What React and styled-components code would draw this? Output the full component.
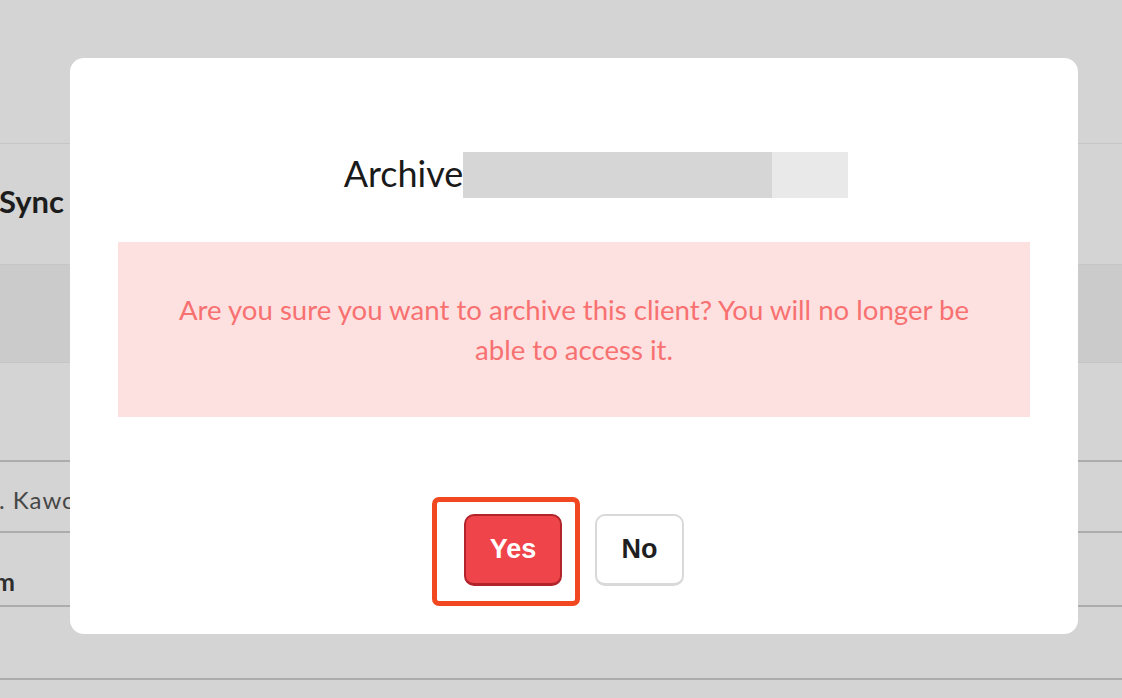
import styled, { createGlobalStyle } from 'styled-components'

const GlobalStyle = createGlobalStyle`
  html, body {
    margin: 0;
    padding: 0;
    background: #d4d4d4;
  }
  body {
    font-family: Lato, 'Noto Sans', sans-serif;
    overflow: hidden;
  }
`

const Page = styled.div`
  position: relative;
  width: 1122px;
  height: 698px;
  overflow: hidden;
  background: #d4d4d4;
`

const Table = styled.div`
  display: flex;
  flex-direction: column;
`

const Row = styled.div`
  box-sizing: border-box;
  display: flex;
  align-items: center;
  height: ${props => props.height}px;
  padding-top: ${props => Math.max(props.nudge || 0, 0)}px;
  padding-bottom: ${props => Math.max(-(props.nudge || 0), 0)}px;
  background: ${props => (props.shaded ? '#cbcbcb' : 'transparent')};
  border-bottom: ${props => (props.strong ? '2px solid #acacac' : '1px solid #c6c6c6')};
  overflow: hidden;
  white-space: nowrap;
`

const Cell = styled.span`
  font-size: ${props => props.size}px;
  font-weight: ${props => (props.bold ? 700 : 400)};
  letter-spacing: ${props => props.spacing || 0}px;
  color: ${props => props.color};
  margin-left: ${props => props.offset}px;
`

const Overlay = styled.div`
  position: absolute;
  inset: 0;
  display: flex;
  align-items: flex-start;
  padding: 58px 0 0 70px;
`

const Modal = styled.div`
  width: 1008px;
  box-sizing: border-box;
  padding: 48px;
  background: #ffffff;
  border-radius: 14px;
  display: flex;
  flex-direction: column;
`

const Title = styled.h2`
  margin: 46px 0 0;
  padding-left: 44px;
  height: 46px;
  display: flex;
  justify-content: center;
  align-items: flex-end;
  font-size: 36px;
  font-weight: 400;
  color: #1a1a1a;
  line-height: 1;
`

const TitleText = styled.span`
  padding-bottom: 7px;
`

const Redacted = styled.span`
  display: flex;
  height: 46px;
`

const RedactBlock = styled.span`
  width: ${props => props.width}px;
  height: 100%;
  background: ${props => props.color};
`

const Warning = styled.div`
  margin-top: 44px;
  height: 175px;
  box-sizing: border-box;
  padding: 0 50px;
  background: #fde0e0;
  display: flex;
  align-items: center;
  justify-content: center;
  text-align: center;
  font-size: 27.6px;
  line-height: 40px;
  color: #f87171;
`

const Actions = styled.div`
  margin-top: 97px;
  display: flex;
  justify-content: center;
  gap: 33px;
`

const Highlight = styled.div`
  position: relative;
  display: flex;
`

const Ring = styled.div`
  position: absolute;
  left: -32px;
  top: -17px;
  right: -18px;
  bottom: -20px;
  border: 5px solid #f24822;
  border-radius: 7px;
  pointer-events: none;
`

const Button = styled.button`
  height: 72px;
  width: ${props => props.width}px;
  box-sizing: border-box;
  border-radius: 10px;
  font-family: 'Liberation Sans', Arial, sans-serif;
  font-weight: 700;
  font-size: 27px;
  cursor: pointer;
  color: ${props => (props.primary ? '#ffffff' : '#1f1f1f')};
  background: ${props => (props.primary ? '#ef444a' : '#ffffff')};
  border: 2px solid ${props => (props.primary ? '#b2242b' : '#d9d9d9')};
  border-bottom-width: 3px;
`

const App = () => (
  <Page>
    <GlobalStyle />
    <Table>
      <Row height={144} />
      <Row height={121} nudge={-6}>
        <Cell size={31} bold color="#1c1c1c" offset={-1}>Sync</Cell>
      </Row>
      <Row height={98} shaded />
      <Row height={99} strong />
      <Row height={71} strong nudge={6}>
        <Cell size={24} spacing={1} color="#474747" offset={-12}>J. Kawczynski</Cell>
      </Row>
      <Row height={74} strong nudge={24}>
        <Cell size={25} bold color="#2e2e2e" offset={-44}>Team</Cell>
      </Row>
      <Row height={73} strong />
    </Table>

    <Overlay>
      <Modal>
        <Title>
          <TitleText>Archive</TitleText>
          <Redacted>
            <RedactBlock width={309} color="#d6d6d6" />
            <RedactBlock width={76} color="#e9e9e9" />
          </Redacted>
        </Title>
        <Warning>
          Are you sure you want to archive this client? You will no longer be
          able to access it.
        </Warning>
        <Actions>
          <Highlight>
            <Button primary width={98}>Yes</Button>
            <Ring />
          </Highlight>
          <Button width={89}>No</Button>
        </Actions>
      </Modal>
    </Overlay>
  </Page>
)

export default App
